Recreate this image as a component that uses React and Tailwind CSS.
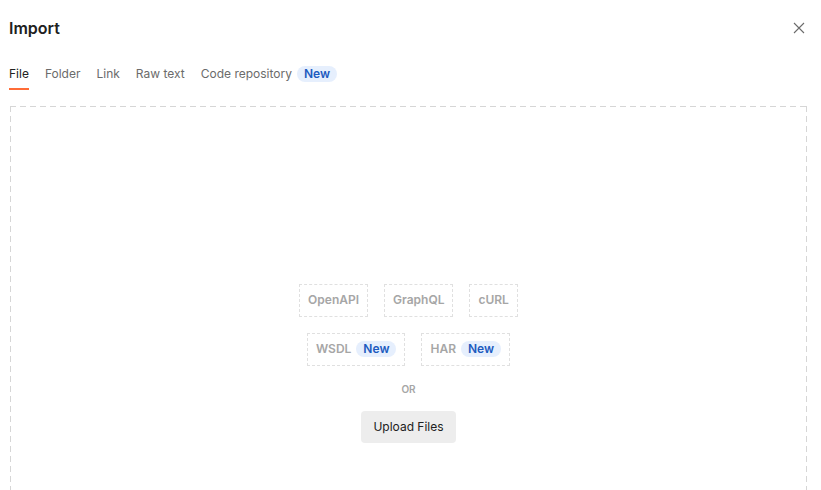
import React from 'react';

function NewBadge() {
  return (
    <span className="ml-[5px] inline-flex h-4 items-center rounded-full bg-[#e6effd] px-[7px] text-xs font-semibold text-[#1d5bbf]">
      New
    </span>
  );
}

function FormatChip({ label, isNew }) {
  return (
    <div className="flex h-[33px] items-center border border-dashed border-[#e0e0e0] px-2 text-xs font-semibold text-[#a6a6a6]">
      {label}
      {isNew && <NewBadge />}
    </div>
  );
}

const tabs = ['File', 'Folder', 'Link', 'Raw text'];

export default function App() {
  return (
    <div className="h-[490px] overflow-hidden bg-white font-['Inter',sans-serif] text-[#212121]">
      <div className="flex h-[58px] items-center justify-between pl-[9px] pr-[16px]">
        <h1 className="-mt-[2px] text-base font-semibold">Import</h1>
        <button type="button" className="-mt-[2px] text-[#6b6b6b]">
          <svg width="12" height="12" viewBox="0 0 12 12" fill="none" stroke="currentColor" strokeWidth="1.1">
            <path d="M1 1l10 10M11 1L1 11" />
          </svg>
        </button>
      </div>

      <div className="flex items-center gap-4 pl-[9px] text-xs text-[#6b6b6b]">
        {tabs.map((tab, i) => (
          <div
            key={tab}
            className={`flex h-[32px] items-center border-b-2 pt-[1px] ${
              i === 0 ? 'border-[#ff6c37] text-[#212121]' : 'border-transparent'
            }`}
          >
            {tab}
          </div>
        ))}
        <div className="flex h-[32px] items-center border-b-2 border-transparent pt-[1px]">
          Code repository
          <NewBadge />
        </div>
      </div>

      {/* drop zone: long dashes drawn with gradients, like the native uploader */}
      <div className="ml-[10px] mr-[14px] mt-[16px] flex h-[514px] flex-col items-center justify-center bg-[linear-gradient(to_right,#d6d6d6_6px,transparent_6px),linear-gradient(to_right,#d6d6d6_6px,transparent_6px),linear-gradient(to_bottom,#d6d6d6_6px,transparent_6px),linear-gradient(to_bottom,#d6d6d6_6px,transparent_6px)] bg-[size:10px_1px,10px_1px,1px_10px,1px_10px] bg-[position:left_top,left_bottom,left_top,right_top] [background-repeat:repeat-x,repeat-x,repeat-y,repeat-y]">
        <div className="flex gap-4">
          <FormatChip label="OpenAPI" />
          <FormatChip label="GraphQL" />
          <FormatChip label="cURL" />
        </div>
        <div className="mt-4 flex gap-4">
          <FormatChip label="WSDL" isNew />
          <FormatChip label="HAR" isNew />
        </div>
        <div className="mt-[16px] text-[10px] font-semibold text-[#a6a6a6]">OR</div>
        <button
          type="button"
          className="mt-[14px] h-8 rounded bg-[#ededed] px-3 text-xs text-[#212121]"
        >
          Upload Files
        </button>
      </div>
    </div>
  );
}
